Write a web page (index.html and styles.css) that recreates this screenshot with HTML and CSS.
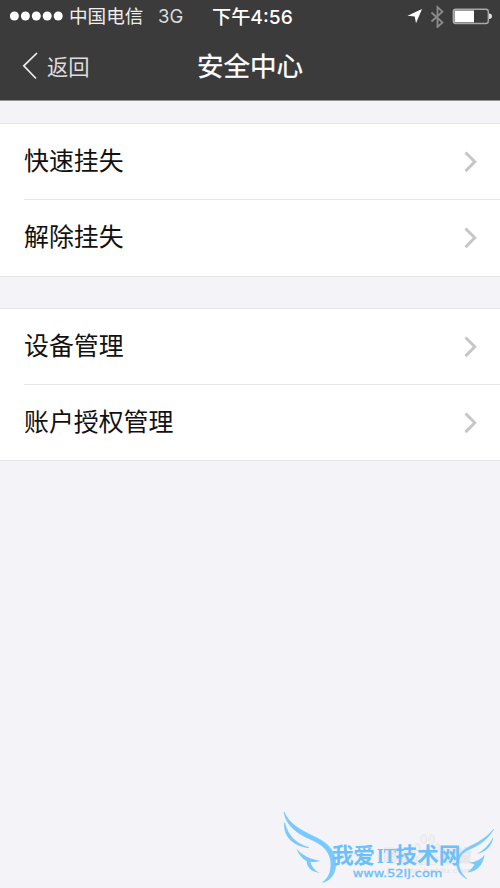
FILE: index.html
```html
<!DOCTYPE html>
<html lang="zh-CN">
<head>
<meta charset="utf-8">
<title>安全中心</title>
<link rel="stylesheet" href="styles.css">
</head>
<body>
<header class="top">
  <div class="status">
    <svg class="signal" width="54" height="10" viewBox="0 0 54 10"><g fill="#fff"><circle cx="4.4" cy="5" r="4.5"/><circle cx="15.4" cy="5" r="4.5"/><circle cx="26.3" cy="5" r="4.5"/><circle cx="37.2" cy="5" r="4.5"/><circle cx="48.2" cy="5" r="4.5"/></g></svg>
    <span class="carrier">中国电信</span>
    <span class="network">3G</span>
    <span class="time">下午4:56</span>
    <svg class="indicators" width="86" height="24" viewBox="0 0 86 24">
      <path d="M15 5 9 19.2 7.7 12.5 .5 11.7Z" fill="#fff"/>
      <path d="m24.5 8.5 11 10-5 4.5V3l5 4.8-11 9.7" fill="none" stroke="#8b8b8b" stroke-width="1.8"/>
      <rect x="46.3" y="5.2" width="35" height="14.3" rx="2.5" fill="none" stroke="#a8a8a8" stroke-width="1.4"/>
      <rect x="47.5" y="6.5" width="19.5" height="11.8" fill="#fff"/>
      <path d="M82 9.5q3 0 3 2.7t-3 2.7Z" fill="#ddd"/>
    </svg>
  </div>
  <nav class="navbar">
    <a class="back"><svg width="16" height="28" viewBox="0 0 16 28"><path d="M15 1 1.8 13.8 14 26.5" fill="none" stroke="#eee" stroke-width="1.7"/></svg><span>返回</span></a>
    <h1>安全中心</h1>
  </nav>
</header>
<main>
  <ul class="group">
    <li><span>快速挂失</span><svg class="chevron" width="13" height="22" viewBox="0 0 13 22"><path d="m1.5 1.5 9.3 9.3-9.3 9.3"/></svg></li>
    <li><span>解除挂失</span><svg class="chevron" width="13" height="22" viewBox="0 0 13 22"><path d="m1.5 1.5 9.3 9.3-9.3 9.3"/></svg></li>
  </ul>
  <ul class="group">
    <li><span>设备管理</span><svg class="chevron" width="13" height="22" viewBox="0 0 13 22"><path d="m1.5 1.5 9.3 9.3-9.3 9.3"/></svg></li>
    <li><span>账户授权管理</span><svg class="chevron" width="13" height="22" viewBox="0 0 13 22"><path d="m1.5 1.5 9.3 9.3-9.3 9.3"/></svg></li>
  </ul>
</main>
<svg class="watermark" width="230" height="88" viewBox="0 0 690 264">
  <g class="ghost">
    <ellipse cx="443" cy="142" rx="8" ry="11"/><ellipse cx="461" cy="117" rx="9" ry="13"/><ellipse cx="485" cy="117" rx="9" ry="13"/><ellipse cx="501" cy="142" rx="8" ry="11"/>
    <path d="M470 143c-11 0-14 14-25 24-12 12-6 28 8 27l17-2 19 2c15 1 20-16 9-27-12-11-15-24-28-24Z"/>
    <text x="340" y="187" font-size="58" textLength="98" lengthAdjust="spacingAndGlyphs">Bai</text>
    <text x="509" y="187" font-size="50" textLength="94">经验</text>
    <text class="ghost-site" x="350" y="220" font-size="24" textLength="258" lengthAdjust="spacingAndGlyphs">jingyan.baidu.com</text>
  </g>
  <g fill="#78c9fc">
    <path stroke="#78c9fc" stroke-width="2" d="M42 36C58 73 93 91 133 110C180 131 198 158 197 195C196 222 181 242 158 247C181 231 185 204 182 181C177 150 154 133 126 120C84 102 48 78 42 36Z"/>
    <path stroke="#78c9fc" stroke-width="2" d="M44 68C54 106 75 130 117 143C71 139 39 109 44 68Z"/>
    <path d="M79 146C98 166 119 177 150 182Q136 188 121 185Q126 207 149 219Q112 214 110 184Q91 173 79 146Z"/>
    <path stroke="#78c9fc" stroke-width="2" d="M671 88C655 116 628 136 602 146C573 158 563 174 567 197C570 214 578 225 590 236C567 226 556 201 562 178C569 152 594 142 622 128Q650 113 671 88Z"/>
    <path d="M670 111C665 140 648 156 621 162Q654 143 670 111ZM644 164C637 198 623 213 592 217Q608 206 613 193Q605 190 597 188Q627 186 644 164Z"/>
  </g>
  <g class="brand">
    <text x="186" y="190" font-size="65" textLength="129">我爱</text>
    <text class="latin" x="320" y="188" font-size="64" textLength="57" lengthAdjust="spacingAndGlyphs">IT</text>
    <text x="376" y="190" font-size="65" textLength="195">技术网</text>
    <text class="site" x="248" y="231" font-size="33" textLength="269" lengthAdjust="spacingAndGlyphs">www.52ij.com</text>
  </g>
</svg>
</body>
</html>
```
FILE: styles.css
```css
* { box-sizing: border-box; }
body {
  margin: 0;
  height: 888px;
  position: relative;
  overflow: hidden;
  background: #f3f3f8;
  color: #111;
  font-family: Inter, "Noto Sans CJK SC", sans-serif;
}
.top { height: 101px; background: #3b3b3b; color: #fff; border-bottom: 1px solid #929292; }
.status { height: 32px; display: flex; align-items: center; padding-left: 10px; font-size: 18px; line-height: 32px; white-space: nowrap; }
.carrier { width: 74px; margin-left: 5px; color: #eee; font-size: 18.6px; }
.network { width: 25px; margin-left: 15px; color: #ddd; font-size: 18.5px; }
.time { width: 82px; margin-left: 29px; padding-top: 2px; font-size: 19.2px; font-weight: 500; }
.indicators { margin-left: 113px; }
.navbar { height: 68px; display: grid; grid-template-columns: 1fr auto 1fr; align-items: center; }
.back { display: flex; align-items: center; gap: 9px; padding-left: 22px; font-size: 21.3px; color: #ddd; }
.back span { margin-top: -2px; }
h1 { margin: 0; font-size: 26.5px; font-weight: 400; line-height: 40px; -webkit-text-stroke: .3px #fff; }
.group { margin: 22px 0 0; padding: 0; list-style: none; background: #fff; border: solid #e6e6e8; border-width: 1px 0; }
.group + .group { margin-top: 31px; }
.group li { height: 76px; margin-left: 24px; padding-right: 23px; display: flex; align-items: center; justify-content: space-between; border-bottom: 1px solid #e6e6e8; font-size: 24.9px; line-height: 36px; }
.group li:last-child { border-bottom: 0; }
.group + .group li:last-child { height: 75px; }
.group span { margin-top: -2px; }
.chevron { fill: none; stroke: #c5c5ca; stroke-width: 2.9; }
.watermark { position: absolute; left: 270px; top: 800px; }
.ghost { fill: #f0f0f4; stroke: #dfe0e4; stroke-width: 2; font-family: "Liberation Sans", "Noto Sans CJK SC", sans-serif; font-weight: 700; }
.ghost-site { fill: #e2e3e7; stroke: none; font-weight: 400; }
.brand { fill: #6cc0fa; font-family: "Noto Sans CJK SC", sans-serif; font-weight: 700; }
.latin { font-family: "Liberation Serif", serif; }
.site { font-family: "DejaVu Sans", sans-serif; font-weight: 400; stroke: #6cc0fa; stroke-width: 1; }
```
